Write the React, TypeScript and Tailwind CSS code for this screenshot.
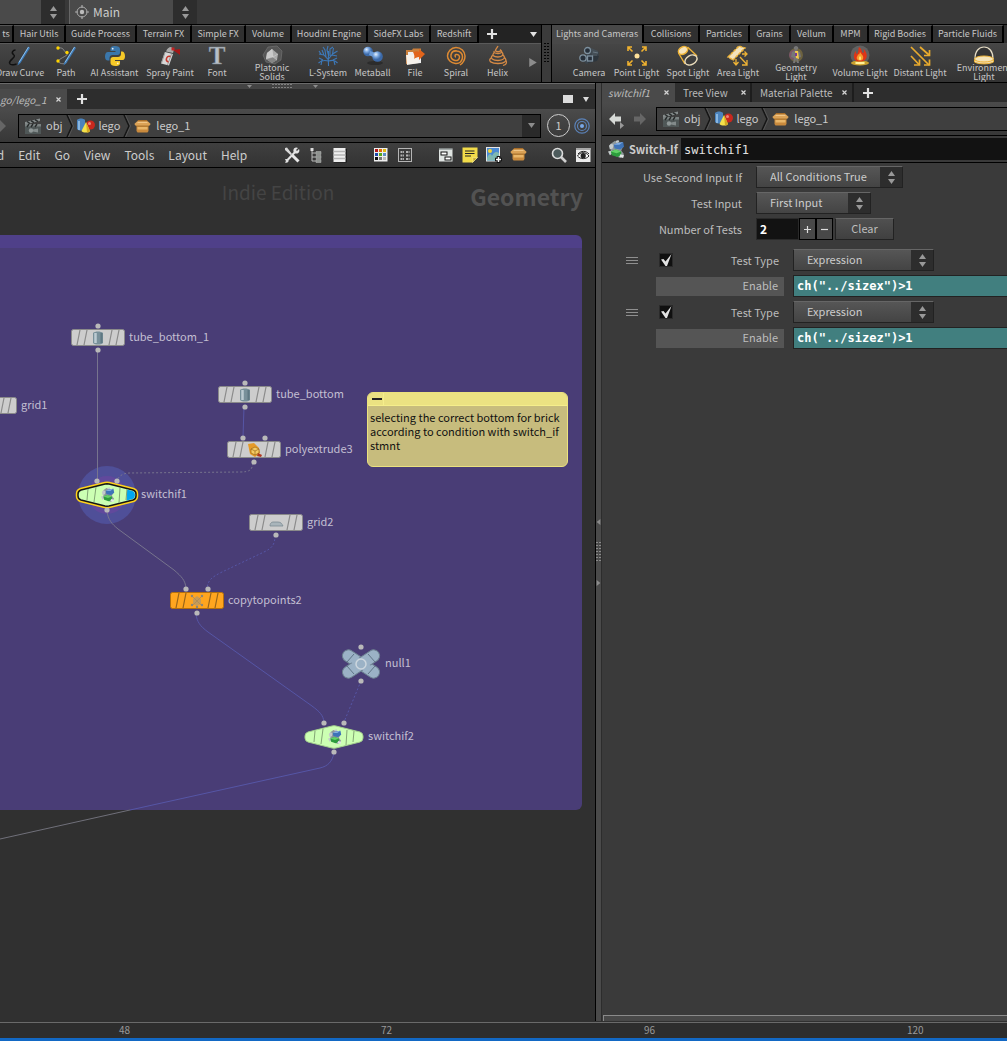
import React from 'react';
import { clsx } from 'clsx';

type IconProps = { className?: string };

/* ---------- small shapes ---------- */

const Tri: React.FC<{ dir: 'up' | 'down' | 'left' | 'right'; className?: string }> = ({ dir, className }) => (
  <svg viewBox="0 0 8 6" preserveAspectRatio="none" className={clsx('fill-current', className)}>
    {dir === 'up' && <path d="M4 0 8 6H0Z" />}
    {dir === 'down' && <path d="M0 0h8L4 6Z" />}
    {dir === 'left' && <path d="M7 0 1 3 7 6Z" />}
    {dir === 'right' && <path d="M1 0 7 3 1 6Z" />}
  </svg>
);

const Plus: React.FC<IconProps> = ({ className }) => (
  <svg viewBox="0 0 10 10" className={clsx('size-[10px]', className)}>
    <path d="M5 0v10M0 5h10" stroke="#e2e2e2" strokeWidth="2.2" />
  </svg>
);

const Close = () => (
  <svg viewBox="0 0 5 5" className="size-[5px]">
    <path d="M.5 .5l4 4M4.500 .5l-4 4" stroke="#d5d5d5" strokeWidth="1.200" />
  </svg>
);

const Dots: React.FC<{ cols: number; rows: number; gap?: number; fill?: string }> = ({ cols, rows, gap = 3, fill = '#777' }) => (
  <svg width={cols * gap} height={rows * gap} className="shrink-0">
    {Array.from({ length: cols * rows }, (_, i) => (
      <rect key={i} x={(i % cols) * gap} y={Math.floor(i / cols) * gap} width={gap - 1} height={1} fill={fill} />
    ))}
  </svg>
);

/* ---------- shelf icons, 20 x 20 ---------- */

const Pen = () => (
  <g>
    <path d="M18.500 .5 8.500 16l-1 3.500 3-2.500L20 2Z" fill="#3c78b4" />
    <path d="M18.500 1 9 16.500" stroke="#8fc0ea" strokeWidth="1" />
  </g>
);

const shelfIcons: Record<string, React.ReactNode> = {
  draw: (
    <>
      <path d="M5.500 4C3 4 1 7 3.500 8.500 7 11-1 14-.5 17c.5 3 5 1.500 7 1" fill="none" stroke="#111" strokeWidth="1.500" />
      <Pen />
    </>
  ),
  path: (
    <>
      <path d="M2 2c7-1 5 4 9 5C14 9 4 12 2 15c2 4 8 3 9 1" fill="none" stroke="#999" strokeWidth=".8" />
      <Pen />
      <g fill="#ffd400">
        <circle cx="2" cy="2" r="1.700" />
        <circle cx="11" cy="6.500" r="1.700" />
        <circle cx="2" cy="15" r="1.700" />
      </g>
    </>
  ),
  python: (
    <>
      <path d="M10 0C6.500 0 5.500 1.300 5.500 3v2h5v1H3C1 6 0 8 0 10.500S1 14.500 3 14.500h1.500V12c0-2 1.500-3 3-3h5C14 9 15 8 15 6.500V3C15 1 13 0 10 0Z" fill="#3b77ab" />
      <path d="M10.500 20c3.500 0 4.500-1.300 4.500-3v-2h-5v-1h7.500c2 0 2.500-2 2.500-4S19 5.500 17.500 5.500H16V8c0 2-1.500 3-3 3H8c-1.500 0-2.500 1-2.500 2.500V17c0 2 2 3 5 3Z" fill="#f6c928" />
      <circle cx="7.700" cy="2.700" r=".9" fill="#e8eef5" />
      <circle cx="12.800" cy="17.300" r=".9" fill="#fff6d5" />
    </>
  ),
  spray: (
    <>
      <path d="M13 4 20 3v6Z" fill="#a31818" />
      <path d="m5 6 8 2-4 11.500-8-2Z" fill="#d6d6d6" />
      <path d="m11.500 8-4 11M5 6.500 1.500 17" stroke="#999" strokeWidth="1" />
      <path d="M6 5.500c1-3 3-4.500 5-4.500l2.500 1.500c.5 1 0 3-.5 4.500Z" fill="#aaa" />
      <path d="M11.500 1.500h3v3h-3Z" fill="#c42222" />
      <path d="M10.500 10.500c-2.500-1-3.500.5-4 2s.5 3 2 3.500" fill="none" stroke="#c4372c" strokeWidth="1.500" />
    </>
  ),
  font: (
    <text x="10" y="18" textAnchor="middle" fontFamily="Liberation Serif, serif" fontWeight="700" fontSize="25" fill="#b7bfc6" stroke="#788088" strokeWidth=".4">
      T
    </text>
  ),
  platonic: (
    <>
      <path d="m6 1 9-1 5 5-1 9-6 4-9-2-3-7Z" fill="#565656" stroke="#777" strokeWidth=".6" />
      <path d="m10 3 6 5-1 6-5 3-6-4 1-6Z" fill="#aaa" />
      <path d="m10 3 1 8-7 2 1-6Z" fill="#c9c9c9" />
      <path d="m11 11 4 3-5 3-6-4Z" fill="#858585" />
      <path d="m10 3 1 8 5-3M11 11l4 3M11 11l-7 2" stroke="#ddd" strokeWidth=".4" fill="none" />
    </>
  ),
  lsystem: (
    <path
      d="M10.500 20c0-5-.5-8 0-11V5M10.500 14 6 9 4 4M6 9l-5-1M8 11 7 4 5 1M10.500 9 9 4l1-4M10.500 13l4-5 1-6M14.500 8l5-3M14 9l5 1M10.500 15c-4-1-7-1-10 2M5 14l-4-2M4 14l-1 5M10.500 15c4-1 6-1 9 2M15 14l4-2M16 15l1 4M12 10l0-7 3-2M3 8 1 5"
      fill="none"
      stroke="#3d79b9"
      strokeWidth="1.100"
    />
  ),
  metaball: (
    <>
      <ellipse cx="12" cy="17" rx="8" ry="2" fill="#2c2c2c" />
      <circle cx="5" cy="5.500" r="4.800" fill="url(#ball)" />
      <path d="m7 5 6 2-1 5-6-3Z" fill="#6b9bd8" />
      <circle cx="14.500" cy="10.500" r="5.300" fill="url(#ball)" />
    </>
  ),
  file: (
    <>
      <path d="M1 4h6l1-1.500h8V16L1 18Z" fill="#c97f3b" />
      <path d="M3 6h13v11L3 18Z" fill="#eee" />
      <path d="m1 9 10 0 3 8-12 2Z" fill="#f6f1ea" />
      <path d="M8 6c3-1 5-1 6 0V3l6 5-6 6v-3c-2 0-4 1-5 2 1-3 0-5-1-7Z" fill="#e2641b" />
    </>
  ),
  spiral: (
    <path
      d="M10 11c-1 0-1.500-2 0-2.500 2-.5 3.500 1 3.500 2.500 0 2.500-2 4-4.500 3.500-3-.5-4.500-3-4-5.500C5.500 6 8 4.500 11 5c3.500.5 5.500 3 5.500 6 0 4-3 7-7 6.500C5 17 1.500 14 1.500 10S5 1.500 10 1.500s9 4 9 8.500c0 4-2 7-5 9"
      fill="none"
      stroke="#dd8a33"
      strokeWidth="1.500"
    />
  ),
  helix: (
    <g fill="none" stroke="#d68a45" strokeWidth="1.300">
      <path d="M10 0C9 2 7.500 3 7.500 4.500c0 1.500 5 1.500 5 0M12 3.500c3 2 1.500 4-2 4S5 6.500 6.500 5" />
      <path d="M13.500 6c3 2.500 1 5-3.500 5S3.500 9 6 7M15 9c3.500 3 0 5.500-5 5.500S1.500 12 4.500 9.500M16.500 11.500c3.500 3.500 0 6-6.500 6S-.5 15 3 12" />
      <path d="M18 14.500c1.500 2.500 0 4-3 5" />
    </g>
  ),
  camera: (
    <>
      <path d="m3 12 10-8 7 2-1 8-12 4Z" fill="#39424a" />
      <path d="m12 9 8 1-2 5-9 2Z" fill="#2d353c" />
      <path d="m12 2 7 3-1 5-5 0Z" fill="#454f57" />
      <g fill="#27303a" stroke="#7d909e" strokeWidth="1.300">
        <circle cx="8.500" cy="4.500" r="3" />
        <circle cx="4" cy="12" r="3.200" />
        <rect x="8.500" y="10" width="5" height="5" />
      </g>
      <path d="m14 6 5 1" stroke="#677580" />
    </>
  ),
  point: (
    <>
      <circle cx="10" cy="10" r="2.500" fill="#ffe19a" />
      <g fill="none" stroke="#f0b22f" strokeWidth="1.600">
        <path d="M5.500 5.500l-4-4M1 5V1h4M14.500 5.500l4-4M15 1h4v4M5.500 14.500l-4 4M1 15v4h4M14.500 14.500l4 4M15 19h4v-4" />
      </g>
    </>
  ),
  spot: (
    <g stroke="#eeb336" strokeWidth="1.400">
      <path d="M0.500 7 7 18M9.500 1 19 10" />
      <ellipse cx="5" cy="4.500" rx="5" ry="3.500" transform="rotate(-30 5 4.500)" fill="#f5e3bb" />
      <ellipse cx="13" cy="14" rx="6.500" ry="4.500" transform="rotate(-30 13 14)" fill="none" stroke="#eadcbc" />
    </g>
  ),
  area: (
    <>
      <path d="m0 11 11-11 6 2L5 14Z" fill="#f3e3bd" stroke="#eeb336" strokeWidth="1.500" strokeDasharray="3 1" />
      <g fill="none" stroke="#eeb336" strokeWidth="1.300">
        <path d="M8 13v6M5.500 16 8 19l2.500-3M12 11l7 7.500M19 14v5h-5M14 8h5M16.500 5.500 19 8l-2.500 2.500" />
      </g>
    </>
  ),
  geometry: (
    <>
      <circle cx="10" cy="9" r="7" fill="#a38b3e" opacity=".45" />
      <circle cx="8" cy="9" r="5" fill="#8c4b94" opacity=".5" />
      <path d="M10 0c3 0 3 4 0 4S7 0 10 0ZM6 6l4-2 4 2 1 5-3 1 1 5h-2l-1-4-1 4H7l1-5-3-1Z" fill="#777" />
      <path d="m9 5 3 0 1 8-3-1Z" fill="#f5c74a" />
      <path d="M9 7l2 0 0 3-2 0Z" fill="#7b3c92" />
    </>
  ),
  fire: (
    <>
      <circle cx="10" cy="9" r="9.500" fill="#777" opacity=".6" />
      <ellipse cx="10" cy="17" rx="9" ry="2.500" fill="#c9a02d" />
      <ellipse cx="10" cy="17" rx="5" ry="1.200" fill="#fff29a" />
      <path d="M9 1c4 3 2 5 4 6 2-1 0-3 1-4 3 4 4 8 1 11-3 2-8 2-10 0-2-3-1-7 1-9 0 2 0 3 1 3 2-2 1-5 2-7Z" fill="#de3517" />
      <path d="M10 6c2 3 4 4 3 7-1 2-5 2-6 0s1-3 1-5c1 1 1 1 2-2Z" fill="#f79a2b" />
      <path d="M10 10c2 2 1 4 0 4s-2-2 0-4Z" fill="#ffe27a" />
    </>
  ),
  distant: (
    <g fill="none" stroke="#e9ab2e" strokeWidth="1.700">
      <path d="m1 1 18 18M1 10l8 8.500M10 1l9 8" />
      <path d="M4 19h5.500v-5.500M14 19h5.500v-5.500M14 9.500h5.500V4" />
    </g>
  ),
  environment: (
    <>
      <path d="M1 13C1 5 5 1 10 1s9 4 9 12" fill="#333" stroke="#e5dcc5" strokeWidth="1.200" />
      <path d="M.5 14v2c4 2.500 15 2.500 19 0v-2Z" fill="#eedcb4" stroke="#eeb336" strokeWidth="1" />
      <ellipse cx="10" cy="13" rx="9.500" ry="3" fill="#f4e3b8" stroke="#eeb336" strokeWidth="1" />
    </>
  ),
};

/* ---------- other icons ---------- */

const Clapper: React.FC<IconProps> = ({ className }) => (
  <svg viewBox="0 0 18 16" className={clsx('h-4 w-[18px] shrink-0', className)}>
    <rect x="1" y="6" width="16" height="10" fill="#4f5757" />
    <path d="m1 4 15-3.500V3L1 6.500Z" fill="#858b8b" />
    <path d="m3 3.500 3 2M7 2.600l3 2M11 1.600l3 2" stroke="#272b2b" strokeWidth="1.400" />
    <rect x="1" y="6" width="16" height="2.500" fill="#7b8282" />
    <path d="M3 9l2-3M7 9l2-3M11 9l2-3" stroke="#272b2b" strokeWidth="1.400" />
    <circle cx="7" cy="12.500" r="2.200" fill="#8f9797" />
    <path d="M9 11.500l5-1v4l-5-1Z" fill="#838b8b" />
  </svg>
);

const Shapes: React.FC<IconProps> = ({ className }) => (
  <svg viewBox="0 0 18 15" className={clsx('h-[15px] w-[18px] shrink-0', className)}>
    <path d="M0 2c2-2 6-2 8 0v9c-2 2-6 2-8 0Z" fill="#4b83bd" />
    <path d="M2 3v9" stroke="#9cc7ec" strokeWidth="1.500" />
    <circle cx="13.500" cy="7" r="4.500" fill="#c8281e" />
    <circle cx="12.500" cy="5.500" r="1.500" fill="#ea8578" />
    <path d="m9 4 4 9c-1 2-7 2-8.500 0Z" fill="#f5e24a" />
    <path d="m9 4 4 9c-.7 1-2 1.500-3 1.500Z" fill="#d3a922" />
  </svg>
);

const BoxShape = () => (
  <>
    <path d="M2.500 5.500h12V12l-1 1.500h-10l-1-1.500Z" fill="#c98a3d" />
    <path d="M3.500 8h10v2.500h-10Z" fill="#e9b669" />
    <path d="M4 1h9l1.500 3h-12Z" fill="#a86d28" />
    <path d="m3 2.500 11 0 2.700 2.500-1.700 2H2L.3 5Z" fill="#dba256" />
    <path d="m3.500 3.300 10 0" stroke="#f6cf94" strokeWidth="1" />
    <path d="M2 7h13" stroke="#8d5a1d" strokeWidth=".6" />
  </>
);

const Box: React.FC<IconProps> = ({ className }) => (
  <svg viewBox="0 0 17 14" className={clsx('h-[14px] w-[17px] shrink-0', className)}>
    <BoxShape />
  </svg>
);

const SwitchGlyph: React.FC<{ size: number }> = ({ size }) => (
  <svg viewBox="0 0 18 18" width={size} height={size} className="shrink-0 overflow-visible">
    <path d="m3 3 4-3 3 1 4 1 2 4-2 4 3 4-4 4-5-2-2-4-3-2Z" fill="#8e989c" />
    <path d="m1 5 2-2 3 1-1 4-3 1ZM0 11l4-1 1 3-3 2ZM8 0l3-1 1 2-3 1Z" fill="#c3cacb" />
    <path d="m6 4 4-2 6-1 1 5-4 3-6-1Z" fill="#3e73b8" />
    <path d="m6 4 4-2 6-1-4 3Z" fill="#84aee2" />
    <path d="m3 11 5-2 6 2 0 4-4 2-6-2Z" fill="#2c9d3d" />
    <path d="m3 11 5-2 6 2-5 2Z" fill="#63d268" />
    <path d="m13 14 4 1-1 3-4-1Z" fill="#dfe4e4" />
  </svg>
);

const Arrow: React.FC<{ flip?: boolean; fill: string }> = ({ flip, fill }) => (
  <svg viewBox="0 0 16 16" className="size-4 shrink-0 overflow-visible">
    <path d={flip ? 'M14 8 8 2v3.500H2v5h6V14Z' : 'M1 8l6-6v3.500h6v5H7V14Z'} fill={fill} />
    {!flip && <path d="m12 11 4 3.500-4 3.500Z" fill="#999" />}
  </svg>
);

const toolIcons: Record<string, React.ReactNode> = {
  wrench: (
    <>
      <path d="M3 13.500 12 4" stroke="#e2e2e2" strokeWidth="2" />
      <path d="M10 1.500c2-1.500 3-1 4-.5l-2 2 1 1 2-2c1 2 0 5-3 4.500S9 3 10 1.500ZM1 12.500c1.500-1 3.500 0 3.500 1.500S3 16 1 15.500l1-1.500Z" fill="#e2e2e2" />
      <path d="m1 1 2-.5L8 7 6.500 8 1 3Z" fill="#d8d8d8" />
      <path d="m8.500 8.500 6 6" stroke="#e8e8e8" strokeWidth="3" />
    </>
  ),
  tree: (
    <>
      <path d="M4 3v11M4 6h4M4 10h4M4 14h4" stroke="#bbb" strokeWidth="1" fill="none" />
      <path d="M2.500 1h3v3h-3Z" fill="#ddd" />
      <path d="M8 4.500h5v3H8ZM8 8.500h5v3H8ZM8 12.500h5v3H8Z" fill="#8f9490" stroke="#bbb" strokeWidth=".5" />
    </>
  ),
  list: (
    <>
      <rect x="2" y="2" width="13" height="13.500" fill="#1c1c1c" />
      <path d="M1.500 1h12v14h-12Z" fill="#efefef" />
      <path d="M1.500 4.500h12M1.500 8h12M1.500 11.500h12" stroke="#b5b5b5" strokeWidth="1.400" />
    </>
  ),
  colors: (
    <>
      <rect x="1" y="1" width="13.500" height="13.500" fill="#efefef" />
      {['#b01818', '#df6b10', '#dfb90d', '#1d49ab', '#56a819', '#5c8dc4', '#111', '#777', '#bbb'].map((c, i) => (
        <rect key={i} x={2 + (i % 3) * 4} y={2 + Math.floor(i / 3) * 4} width="3" height="3" fill={c} />
      ))}
    </>
  ),
  table: (
    <g fill="none" stroke="#b5b5b5">
      <rect x="1.500" y="1.500" width="13" height="13" strokeWidth="1" />
      <path d="M3.500 5h3.500M9 5h3.500M3.500 8.500h3.500M9 8.500h3.500M3.500 12h3.500M9 12h3.500" strokeWidth="1.800" strokeDasharray="2 .6" />
    </g>
  ),
  layout: (
    <>
      <rect x="1" y="1.500" width="13.500" height="13" fill="#dfe4e2" />
      <path d="M1 2h13.500" stroke="#6f7776" />
      <rect x="3" y="5" width="6" height="3" fill="#fff" stroke="#111" />
      <rect x="7" y="10" width="6" height="3" fill="#fff" stroke="#111" />
    </>
  ),
  note: (
    <>
      <path d="M.5.5h15v10l-5 5H.5Z" fill="#f2dc4a" />
      <path d="M10.500 15.500c1-2 .5-3.500 0-5 2 .5 4 .5 5 0Z" fill="#c3a827" stroke="#fff3a0" strokeWidth=".6" />
      <path d="M3 4h9.500M3 6.500h9.500M3 9h6" stroke="#222" strokeWidth="1.200" />
    </>
  ),
  image: (
    <>
      <rect x=".5" y=".5" width="13" height="13.500" fill="#4b8ad2" stroke="#e7e7e7" />
      <path d="M1 11c2-5 4-5 5-2 2-4 4-5 7-3v7.500H1Z" fill="#7fb8b0" />
      <circle cx="4" cy="4" r="2" fill="#f6d533" />
      <path d="M12.500 9v7M9 12.500h7" stroke="#111" strokeWidth="3.600" />
      <path d="M12.500 10v5M10 12.500h5" stroke="#fff" strokeWidth="1.500" />
    </>
  ),
  box: <BoxShape />,
  search: (
    <>
      <path d="m10 10 5 5" stroke="#cfcfcf" strokeWidth="2.600" />
      <circle cx="6.500" cy="6.500" r="5" fill="#4d5b5c" stroke="#dcdcdc" strokeWidth="1.600" />
    </>
  ),
  eye: (
    <>
      <rect x="1" y="1" width="14.500" height="14" fill="#ececec" />
      <path d="M1 1h14.500v2H1Z" fill="#a9a9a9" />
      <path d="M2.500 9c3-4.500 8-4.500 11.500 0-3 3.500-8.500 3.500-11.500 0Z" fill="#fff" stroke="#222" strokeWidth="1" />
      <circle cx="8.200" cy="8.700" r="2.600" fill="#222" />
      <path d="M3 7c3-3.500 8-3.500 11 0" stroke="#222" strokeWidth="1" fill="none" />
    </>
  ),
};

/* ---------- controls ---------- */

const Spinner: React.FC<IconProps> = ({ className }) => (
  <span className={clsx('pointer-events-none flex flex-col items-center justify-center gap-[3px] bg-[#2d2d2d] text-[#999]', className)}>
    <Tri dir="up" className="h-[5px] w-[7px]" />
    <Tri dir="down" className="h-[5px] w-[7px]" />
  </span>
);

interface DropProps {
  id: string;
  value: string;
  className: string;
}

const Drop: React.FC<DropProps> = ({ id, value, className }) => (
  <div className={clsx('relative h-[22px] shrink-0 border border-[#222] border-t-[#666] bg-linear-to-b from-[#565656] to-[#444]', className)}>
    <select id={id} className="block h-full w-full appearance-none bg-transparent pr-6 pb-[2px] pl-[13px] text-[11px] leading-[18px] text-[#ccc] outline-none">
      <option>{value}</option>
    </select>
    <Spinner className="absolute inset-y-0 right-0 w-[22px]" />
  </div>
);

const Chevron = () => (
  <svg viewBox="0 0 8 22" className="mx-[3px] h-[22px] w-2 shrink-0 overflow-visible">
    <path d="m1 0 5 11-5 11" fill="none" stroke="#151515" strokeWidth="1.500" />
    <path d="m2.500 0 5 11-5 11" fill="none" stroke="#5a5a5a" strokeWidth=".8" />
  </svg>
);

const Crumbs = () => (
  <>
    <a href="#obj" className="flex items-center gap-1 pl-[5px]">
      <Clapper />
      obj
    </a>
    <Chevron />
    <a href="#lego" className="flex items-center gap-1">
      <Shapes />
      lego
    </a>
    <Chevron />
    <a href="#lego_1" className="flex items-center gap-[5px]">
      <Box />
      lego_1
    </a>
  </>
);

/* ---------- shelf ---------- */

interface ShelfTabData {
  name: string;
  w: string;
  active?: boolean;
}

const leftTabs: ShelfTabData[] = [
  { name: 'ts', w: 'w-[14px]' },
  { name: 'Hair Utils', w: 'w-[52px]' },
  { name: 'Guide Process', w: 'w-[71px]' },
  { name: 'Terrain FX', w: 'w-[55px]' },
  { name: 'Simple FX', w: 'w-[54px]' },
  { name: 'Volume', w: 'w-[46px]' },
  { name: 'Houdini Engine', w: 'w-[76px]' },
  { name: 'SideFX Labs', w: 'w-[63px]' },
  { name: 'Redshift', w: 'w-[48px]' },
];

const rightTabs: ShelfTabData[] = [
  { name: 'Lights and Cameras', w: 'w-[92px]', active: true },
  { name: 'Collisions', w: 'w-[56px]' },
  { name: 'Particles', w: 'w-[50px]' },
  { name: 'Grains', w: 'w-[41px]' },
  { name: 'Vellum', w: 'w-[43px]' },
  { name: 'MPM', w: 'w-[35px]' },
  { name: 'Rigid Bodies', w: 'w-[64px]' },
  { name: 'Particle Fluids', w: 'w-[71px]' },
];

interface ToolData {
  name: string[];
  icon: string;
  w: string;
}

const leftTools: ToolData[] = [
  { name: ['Draw Curve'], icon: 'draw', w: 'w-[50px]' },
  { name: ['Path'], icon: 'path', w: 'w-[42px]' },
  { name: ['AI Assistant'], icon: 'python', w: 'w-[55px]' },
  { name: ['Spray Paint'], icon: 'spray', w: 'w-[56px]' },
  { name: ['Font'], icon: 'font', w: 'w-[38px]' },
  { name: ['Platonic', 'Solids'], icon: 'platonic', w: 'w-[72px]' },
  { name: ['L-System'], icon: 'lsystem', w: 'w-[40px]' },
  { name: ['Metaball'], icon: 'metaball', w: 'w-[49px]' },
  { name: ['File'], icon: 'file', w: 'w-[36px]' },
  { name: ['Spiral'], icon: 'spiral', w: 'w-[46px]' },
  { name: ['Helix'], icon: 'helix', w: 'w-[37px]' },
];

const rightTools: ToolData[] = [
  { name: ['Camera'], icon: 'camera', w: 'w-[48px]' },
  { name: ['Point Light'], icon: 'point', w: 'w-[47px]' },
  { name: ['Spot Light'], icon: 'spot', w: 'w-[56px]' },
  { name: ['Area Light'], icon: 'area', w: 'w-[44px]' },
  { name: ['Geometry', 'Light'], icon: 'geometry', w: 'w-[72px]' },
  { name: ['Volume Light'], icon: 'fire', w: 'w-[56px]' },
  { name: ['Distant Light'], icon: 'distant', w: 'w-[64px]' },
  { name: ['Environment', 'Light'], icon: 'environment', w: 'w-[64px]' },
];

const ShelfTab: React.FC<ShelfTabData> = ({ name, w, active }) => (
  <button
    className={clsx(
      'flex h-[18px] shrink-0 items-center justify-center border-r-2 border-black text-[9px] leading-[16px] whitespace-nowrap',
      active ? 'bg-[#484848]' : 'border-b border-t border-t-[#555] bg-[#303030]',
      w
    )}
  >
    {name}
  </button>
);

const ShelfTool: React.FC<ToolData> = ({ name, icon, w }) => (
  <button className={clsx('flex shrink-0 flex-col items-center pt-[2px] text-[9px] leading-[9px] whitespace-nowrap', w)}>
    <svg viewBox="0 0 20 20" className="size-5 shrink-0 overflow-visible">
      {shelfIcons[icon]}
    </svg>
    <span className="-mt-[3px] flex h-[18px] flex-col justify-center">
      {name.map((line) => (
        <span key={line}>{line}</span>
      ))}
    </span>
  </button>
);

const Shelf = () => (
  <div className="flex h-[58px] border-b border-black text-[#c6c6c6]">
    <div className="w-[541px] shrink-0 overflow-hidden">
      <div className="flex h-[18px] items-center bg-[#232323]">
        {leftTabs.map((t) => (
          <ShelfTab key={t.name} {...t} />
        ))}
        <button aria-label="Add shelf" className="ml-2">
          <Plus />
        </button>
        <button aria-label="Shelf menu" className="mr-1 ml-auto">
          <Tri dir="down" className="h-[5px] w-[7px] text-[#e2e2e2]" />
        </button>
      </div>
      <div className="flex h-[39px] border-t border-[#5a5a5a] bg-linear-to-b from-[#464646] to-[#333]">
        <div className="-ml-[5px] flex">
          {leftTools.map((t) => (
            <ShelfTool key={t.icon} {...t} />
          ))}
        </div>
        <Tri dir="right" className="mt-[14px] ml-3 h-[9px] w-[10px] text-[#8c8c8c]" />
      </div>
    </div>
    <div className="flex w-[11px] shrink-0 items-center justify-center border-x border-black bg-[#3b3b3b]">
      <Dots cols={2} rows={7} gap={3} fill="#050505" />
    </div>
    <div className="min-w-0 flex-1 overflow-hidden">
      <div className="flex h-[18px] bg-[#303030]">
        {rightTabs.map((t) => (
          <ShelfTab key={t.name} {...t} />
        ))}
      </div>
      <div className="flex h-[39px] border-t border-[#484848] bg-linear-to-b from-[#464646] to-[#333] pl-[13px]">
        {rightTools.map((t) => (
          <ShelfTool key={t.icon} {...t} />
        ))}
      </div>
    </div>
  </div>
);

/* ---------- network editor ---------- */

type NodeKind = 'box' | 'switch' | 'null';

interface NodeData {
  name: string;
  kind: NodeKind;
  x: number;
  y: number;
  glyph?: 'tube' | 'extrude' | 'grid' | 'copy';
  ins: number[];
  hideOut?: boolean;
  fill?: string;
  selected?: boolean;
}

const nodes: NodeData[] = [
  { name: 'tube_bottom_1', kind: 'box', x: 98, y: 170, glyph: 'tube', ins: [0] },
  { name: 'grid1', kind: 'box', x: -10, y: 238, ins: [], hideOut: true },
  { name: 'tube_bottom', kind: 'box', x: 245, y: 227, glyph: 'tube', ins: [0] },
  { name: 'polyextrude3', kind: 'box', x: 254, y: 282, glyph: 'extrude', ins: [-11, 11] },
  { name: 'switchif1', kind: 'switch', x: 107, y: 327, ins: [-10, 10], selected: true },
  { name: 'grid2', kind: 'box', x: 276, y: 355, glyph: 'grid', ins: [] },
  { name: 'copytopoints2', kind: 'box', x: 197, y: 433, glyph: 'copy', ins: [-11, 11], fill: '#ffa51f' },
  { name: 'null1', kind: 'null', x: 361, y: 496, ins: [0] },
  { name: 'switchif2', kind: 'switch', x: 334, y: 569, ins: [-10, 10] },
];

const wires = [
  { d: 'M97.500 182V313', color: '#77748e' },
  { d: 'M244 239 243 269', color: '#5656a6' },
  { d: 'M253 295C252 302 250 304 240 304L130 305C122 305 118 309 117 313', color: '#77748e', dashed: true },
  { d: 'M107 343C108 352 112 356 118 361L174 402C182 409 185 412 186 420', color: '#77748e' },
  { d: 'M275 367C275 377 272 380 264 384L222 404C212 409 208 412 207 420', color: '#5656a6', dashed: true },
  { d: 'M196 446C197 454 200 458 208 464L312 538C320 544 323 547 324 554', color: '#5656a6' },
  { d: 'M361 513 344 554', color: '#5656a6', dashed: true },
  { d: 'M334 585C332 594 328 598 320 600L130 642', color: '#5656a6' },
  { d: 'M130 642 0 671', color: '#70707a' },
];

const glyphs = {
  tube: (
    <>
      <path d="M-5-5C-3-7 3-7 5-5V5C3 7-3 7-5 5Z" fill="#78909a" />
      <path d="M-2.500-5V5" stroke="#bccbd2" strokeWidth="2.500" />
      <path d="M3.500-5V5" stroke="#5f7883" strokeWidth="2" />
    </>
  ),
  extrude: (
    <>
      <path d="m-6-6 6-1 5 5 1 5-5 4-5-3Z" fill="#e59a28" />
      <path d="m-3-1 4-2 4 2v4l-4 2-4-2Z" fill="#f5cb63" stroke="#8d5c12" strokeWidth=".6" />
      <path d="M1 1v4M-3-1 1 1l4-2" stroke="#8d5c12" strokeWidth=".6" fill="none" />
      <path d="m4 3 4 2-1 2-4-1Z" fill="#b23a20" />
    </>
  ),
  grid: <path d="M-6 3c0-2 1-4 3-4h5c3 0 4 2 5 4Z" fill="#a9b5bb" stroke="#7c8a92" strokeWidth=".8" />,
  copy: (
    <>
      <path d="m-4-2 4-3 4 3v5l-4 2-4-2Z" fill="#c69b58" />
      <path d="m-5-5 10 10M5-5-5 5" stroke="#a98a5a" strokeWidth=".8" />
      <g fill="#8b8577">
        <circle cx="-5" cy="-5" r="1.200" />
        <circle cx="5" cy="-5" r="1.200" />
        <circle cx="-5" cy="4" r="1.200" />
        <circle cx="5" cy="4" r="1.200" />
        <circle cx="0" cy="6" r="1.200" />
      </g>
    </>
  ),
};

const HEX = 'M-2-11 0-11.300 2-11 26-5Q29-4 29-1V1Q29 4 26 5L2 11 0 11.300-2 11-26 5Q-29 4-29 1V-1Q-29-4-26-5Z';

const NodeShape: React.FC<{ node: NodeData }> = ({ node }) => {
  if (node.kind === 'null') {
    return (
      <g>
        <g fill="#9bb2c6" stroke="#6c7f90" strokeWidth="1">
          <rect x="-21" y="-6" width="42" height="12" rx="6" transform="rotate(33)" />
          <rect x="-21" y="-6" width="42" height="12" rx="6" transform="rotate(-33)" />
        </g>
        <path d="M-12-8 0 0 12-8M-12 8 0 0 12 8" stroke="#9bb2c6" strokeWidth="8" fill="none" />
        <path d="m-14-2 7-8M7-10l7 8M-14 2l7 8M7 10l7-8" stroke="#5f7486" strokeWidth="1" />
        <circle r="5" fill="#9bb2c6" stroke="#ccd6de" strokeWidth="1.500" />
      </g>
    );
  }
  if (node.kind === 'switch') {
    return (
      <g>
        {node.selected && <path d={HEX} fill="none" stroke="#ffd21a" strokeWidth="4.500" />}
        <path d={HEX} fill="#ccffb3" stroke={node.selected ? '#151515' : '#a4d08e'} strokeWidth={node.selected ? 1.5 : 1} />
        {node.selected && <path d="m20-5.500 5.500 1.500q2.500 1 2.500 4t-2.500 4l-6 1.500Z" fill="#00a6f2" />}
        <path d="m-19-6-1 11M-11-8l-2 15M13-7l-1 15M20-6l-1 11" stroke="#83a575" strokeWidth="1" />
        <g transform="translate(-6 -7)">
          <SwitchGlyph size={14} />
        </g>
      </g>
    );
  }
  return (
    <g>
      <rect x="-26.500" y="-8.500" width="53" height="16" rx="2" fill={node.fill ?? '#cdcdcd'} stroke={node.fill ? '#b46f0c' : '#8a8a8a'} />
      <path d="m-18-8-3 15M-11-8l-3 15M14-8l-3 15M21-8l-3 15" stroke={node.fill ? '#98641a' : '#8a8a8a'} strokeWidth="1.200" />
      {node.glyph && glyphs[node.glyph]}
    </g>
  );
};

// distance of the input and output dots from the node centre
const ports: Record<NodeKind, [number, number]> = {
  box: [12, 12],
  switch: [14, 15],
  null: [17, 17],
};

const NetworkNode: React.FC<{ node: NodeData }> = ({ node }) => {
  const [inY, outY] = ports[node.kind];
  return (
    <div className="absolute size-0" style={{ left: node.x, top: node.y }}>
      <svg className="absolute size-px overflow-visible">
        <NodeShape node={node} />
        {node.ins.map((dx) => (
          <circle key={dx} cx={dx} cy={-inY} r="2.600" fill="#b9b9b9" />
        ))}
        {!node.hideOut && <circle cx="0" cy={outY} r="2.600" fill="#b9b9b9" />}
      </svg>
      <span
        className={clsx(
          'absolute -top-[10px] text-[11px] leading-4 text-[#c3bfd2]',
          node.kind === 'null' ? 'left-6' : node.kind === 'switch' ? 'left-[34px]' : 'left-[31px]'
        )}
      >
        {node.name}
      </span>
    </div>
  );
};

const Network = () => (
  <div className="relative flex-1 overflow-hidden bg-[#303030]">
    <div className="flex items-start justify-end gap-[136px] pt-[10px] pr-3">
      <span className="text-[19px] leading-7 text-[#444]">Indie Edition</span>
      <span className="text-[23px] leading-9 font-bold text-[#525252]">Geometry</span>
    </div>
    <div className="absolute top-[67px] -left-2 h-[575px] w-[590px] rounded-md border-t-[13px] border-[#4f4089] bg-[#493d76]" />
    <svg className="absolute inset-0 h-full w-full">
      {nodes
        .filter((n) => n.selected)
        .map((n) => (
          <g key={n.name}>
            <circle cx={n.x} cy={n.y} r="29" fill="#4f4f98" />
            <circle cx={n.x} cy={n.y} r="19" fill="#61499c" />
          </g>
        ))}
      {wires.map((w) => (
        <path key={w.d} d={w.d} fill="none" stroke={w.color} strokeWidth="1" strokeDasharray={w.dashed ? '2 2' : undefined} />
      ))}
    </svg>
    {nodes.map((n) => (
      <NetworkNode key={n.name} node={n} />
    ))}
    <div className="absolute top-[224px] left-[367px] h-[75px] w-[201px] overflow-hidden rounded-md border border-[#ebe27f] bg-[#c7bc7d]">
      <div className="flex h-[13px] items-center border-b border-[#f5ee8c] bg-[#ebe282]">
        <button aria-label="Collapse note" className="flex h-full w-4 items-center justify-end border-r border-[#f5ee8c] pr-px">
          <span className="h-[2px] w-[10px] bg-[#222]" />
        </button>
      </div>
      <p className="px-[2px] pt-1 text-[11px] leading-[14px] text-[#111]">
        selecting the correct bottom for brick
        <br />
        according to condition with switch_if
        <br />
        stmnt
      </p>
    </div>
  </div>
);

const toolGroups = [
  ['wrench', 'tree', 'list'],
  ['colors', 'table'],
  ['layout', 'note', 'image', 'box'],
  ['search', 'eye'],
];

const NetworkPane = () => (
  <section className="flex w-[595px] shrink-0 flex-col">
    <div className="flex h-[6px] items-center border-t border-[#6a6a6a] bg-[#434343] text-[#8c8c8c]">
      <Tri dir="down" className="ml-[247px] h-[3px] w-[5px]" />
      <span className="mx-5 flex">
        <Dots cols={7} rows={2} gap={3} fill="#808080" />
      </span>
      <Tri dir="down" className="h-[3px] w-[5px]" />
    </div>
    <div className="flex h-5 items-center bg-[#2d2d2d]">
      <div className="flex h-full w-[67px] items-center justify-between bg-[#4a4a4a] pr-[6px] text-[10px] text-[#bbb] italic">
        <button className="italic">go/lego_1</button>
        <button aria-label="Close tab">
          <Close />
        </button>
      </div>
      <button aria-label="New tab" className="ml-[10px]">
        <Plus />
      </button>
      <button aria-label="Maximize pane" className="mr-[10px] ml-auto h-2 w-[10px] bg-[#dcdcdc]" />
      <button aria-label="Pane menu" className="mr-[6px]">
        <Tri dir="down" className="h-[5px] w-[6px] text-[#dcdcdc]" />
      </button>
    </div>
    <div className="flex h-[34px] items-center border-b border-black bg-linear-to-b from-[#4b4b4b] to-[#373737] text-[11px] text-[#ccc]">
      <span className="-ml-2 w-[26px] shrink-0">
        <Arrow flip fill="#666" />
      </span>
      <nav className="flex h-6 flex-1 items-center border border-black bg-[#3f3f3f]">
        <Crumbs />
        <button aria-label="Path history" className="ml-auto flex h-full w-[18px] items-center justify-center bg-[#2a2a2a]">
          <Tri dir="down" className="h-[5px] w-[7px] text-[#8c8c8c]" />
        </button>
      </nav>
      <button className="ml-[6px] flex size-[23px] items-center justify-center rounded-full border border-[#ccc]">1</button>
      <button aria-label="Follow selection" className="mr-[5px] ml-1">
        <svg viewBox="0 0 16 16" className="size-4">
          <g fill="none" stroke="#5b82b8" strokeWidth="1.200">
            <circle cx="8" cy="8" r="7.200" />
            <circle cx="8" cy="8" r="4.500" />
          </g>
          <circle cx="8" cy="8" r="2" fill="#78a7e6" />
        </svg>
      </button>
    </div>
    <div className="flex h-[25px] items-center border-b border-black bg-linear-to-b from-[#3f3f3f] to-[#333] text-[12px] text-[#ccc]">
      <div className="-ml-[18px] flex w-[302px] shrink-0 gap-[14px]">
        {['Add', 'Edit', 'Go', 'View', 'Tools', 'Layout', 'Help'].map((m) => (
          <button key={m}>{m}</button>
        ))}
      </div>
      <div className="flex gap-[25px]">
        {toolGroups.map((group) => (
          <div key={group[0]} className="flex gap-2">
            {group.map((name) => (
              <button key={name} aria-label={name}>
                <svg viewBox="0 0 16 16" className="size-4 overflow-visible">
                  {toolIcons[name]}
                </svg>
              </button>
            ))}
          </div>
        ))}
      </div>
    </div>
    <Network />
  </section>
);

/* ---------- parameter pane ---------- */

const PaneTab: React.FC<{ name: string; active?: boolean; className: string }> = ({ name, active, className }) => (
  <div className={clsx('flex h-full shrink-0 items-center justify-between text-[10px] text-[#bbb]', active ? 'bg-[#4a4a4a] italic' : 'border-r-2 border-[#1d1d1d] bg-[#2f2f2f]', className)}>
    <button>{name}</button>
    <button aria-label={`Close ${name}`}>
      <Close />
    </button>
  </div>
);

const tests = [
  { id: 'test1', expr: 'ch("../sizex")>1' },
  { id: 'test2', expr: 'ch("../sizez")>1' },
];

const Check: React.FC<{ label: string }> = ({ label }) => (
  <span className="relative size-[14px] shrink-0">
    <input type="checkbox" defaultChecked aria-label={label} className="peer block size-[14px] appearance-none border border-[#2a2a2a] bg-[#101010]" />
    <svg viewBox="0 0 14 14" className="pointer-events-none absolute inset-0 hidden size-[14px] peer-checked:block">
      <path d="M2 6.500 4.500 6l2 2.500L12.500 1 8 13H6.500Z" fill="#e2e2e2" />
    </svg>
  </span>
);

const ParamPane = () => (
  <section className="flex min-w-0 flex-1 flex-col overflow-hidden bg-[#3a3a3a] text-[11px] text-[#bdbdbd]">
    <div className="flex h-[19px] items-center bg-[#2d2d2d]">
      <PaneTab name="switchif1" active className="w-[73px] pr-[6px] pl-[6px]" />
      <PaneTab name="Tree View" className="w-[77px] pr-[4px] pl-[8px]" />
      <PaneTab name="Material Palette" className="w-[102px] pr-[5px] pl-[8px]" />
      <button aria-label="New tab" className="ml-[9px]">
        <Plus />
      </button>
    </div>
    <div className="flex h-[34px] items-center border-b border-black bg-linear-to-b from-[#4b4b4b] to-[#373737] text-[#ccc]">
      <div className="flex w-[54px] shrink-0 gap-2 pl-[6px]">
        <button aria-label="Back">
          <Arrow fill="#d6d9d6" />
        </button>
        <button aria-label="Forward">
          <Arrow flip fill="#666" />
        </button>
      </div>
      <nav className="-mr-px flex h-6 flex-1 items-center border border-black bg-[#3f3f3f]">
        <Crumbs />
      </nav>
    </div>
    <div className="flex h-[27px] items-center border-b border-black pl-[6px]">
      <SwitchGlyph size={17} />
      <label htmlFor="node-name" className="ml-[4px] w-[52px] font-bold whitespace-nowrap text-[#ccc]">
        Switch-If
      </label>
      <input
        id="node-name"
        defaultValue="switchif1"
        className="h-[22px] min-w-0 flex-1 bg-[#121212] px-[3px] pt-[2px] font-['DejaVu_Sans_Mono',monospace] text-[12px] text-[#e2e2e2] outline-none"
      />
    </div>
    <div className="flex-1 pt-px">
      <div className="flex h-[26px] items-center gap-[14px]">
        <label htmlFor="second" className="w-[140px] shrink-0 text-right">
          Use Second Input If
        </label>
        <Drop id="second" value="All Conditions True" className="w-[147px]" />
      </div>
      <div className="flex h-[26px] items-center gap-[14px]">
        <label htmlFor="input" className="w-[140px] shrink-0 text-right">
          Test Input
        </label>
        <Drop id="input" value="First Input" className="w-[115px]" />
      </div>
      <div className="flex h-[26px] items-center gap-[14px]">
        <label htmlFor="count" className="w-[140px] shrink-0 text-right">
          Number of Tests
        </label>
        <div className="flex h-[22px]">
          <input id="count" defaultValue="2" className="w-[43px] border border-[#2a2a2a] bg-[#121212] px-[3px] text-[12px] font-bold text-white outline-none" />
          <button aria-label="Add test" className="flex w-[17px] items-center justify-center border border-black bg-[#484848]">
            <svg viewBox="0 0 7 7" className="size-[7px]">
              <path d="M3.500 0v7M0 3.500h7" stroke="#ddd" strokeWidth="1.200" />
            </svg>
          </button>
          <button aria-label="Remove test" className="flex w-[17px] items-center justify-center border border-black bg-[#484848]">
            <svg viewBox="0 0 7 7" className="size-[7px]">
              <path d="M0 3.500h7" stroke="#ddd" strokeWidth="1.200" />
            </svg>
          </button>
          <button className="ml-[2px] w-[59px] border border-[#222] border-t-[#666] bg-linear-to-b from-[#505050] to-[#404040] pb-[2px] leading-[18px]">Clear</button>
        </div>
      </div>
      <div className="pt-[5px]">
        {tests.map((t) => (
          <div key={t.id}>
            <div className="flex h-[26px] items-center pl-6">
              <svg viewBox="0 0 12 9" className="h-[9px] w-3">
                <path d="M0 1.500h12M0 4.500h12M0 7.500h12" stroke="#8f8f8f" strokeWidth="1" />
              </svg>
              <span className="ml-[21px] flex">
                <Check label="Test enabled" />
              </span>
              <label htmlFor={`${t.id}-type`} className="w-[106px] text-right">
                Test Type
              </label>
              <Drop id={`${t.id}-type`} value="Expression" className="ml-[14px] w-[141px]" />
            </div>
            <div className="flex h-[26px] items-center pl-[54px]">
              <label htmlFor={`${t.id}-enable`} className="h-[19px] w-[128px] shrink-0 bg-[#555] pr-[6px] text-right leading-[17px]">
                Enable
              </label>
              <input
                id={`${t.id}-enable`}
                defaultValue={t.expr}
                className="ml-[9px] h-[22px] min-w-0 flex-1 border border-r-0 border-[#222] bg-[#417f7f] px-[3px] font-['DejaVu_Sans_Mono',monospace] text-[12px] font-bold text-white outline-none"
              />
            </div>
          </div>
        ))}
      </div>
    </div>
    <div className="ml-px h-[6px] border-t border-l border-[#8a8a8a] bg-[#484848]" />
  </section>
);

/* ---------- page ---------- */

const App: React.FC = () => (
  <div className="flex min-h-screen flex-col overflow-hidden bg-[#303030] font-['Noto_Sans_CJK_SC',sans-serif] text-[12px]">
    <header className="flex h-[25px] items-center border-b border-black bg-[#383838]">
      <div className="flex h-6 w-[65px] justify-end bg-[#4a4a4a]">
        <Spinner className="w-6" />
      </div>
      <div className="relative ml-1 flex h-6 w-[128px] items-center border-l border-[#666] bg-[#4a4a4a]">
        <svg viewBox="0 0 14 14" className="ml-[5px] size-[14px] shrink-0">
          <circle cx="7" cy="7" r="5" fill="none" stroke="#aaa" strokeWidth="1" />
          <circle cx="7" cy="7" r="2.200" fill="#bbb" />
          <path d="M7 0v3M7 11v3M0 7h3M11 7h3" stroke="#aaa" strokeWidth="1.200" />
        </svg>
        <select aria-label="Desktop" className="h-full flex-1 appearance-none bg-transparent pl-1 text-[12px] text-[#ccc] outline-none">
          <option>Main</option>
        </select>
        <Spinner className="absolute inset-y-0 right-0 w-6" />
      </div>
    </header>
    <svg className="absolute size-0">
      <defs>
        <radialGradient id="ball" cx=".35" cy=".3">
          <stop offset="0" stopColor="#e4f0ff" />
          <stop offset=".5" stopColor="#7aa6de" />
          <stop offset="1" stopColor="#3b69a8" />
        </radialGradient>
      </defs>
    </svg>
    <Shelf />
    <main className="flex flex-1">
      <NetworkPane />
      <div className="flex w-[7px] shrink-0 flex-col items-center justify-center gap-[17px] border-r border-l border-r-[#2c2c2c] border-l-black bg-[#4a4a4a] text-[#8a8a8a]">
        <Tri dir="left" className="h-[6px] w-[5px]" />
        <Dots cols={2} rows={7} gap={3} fill="#8a8a8a" />
        <Tri dir="right" className="h-[6px] w-[5px]" />
      </div>
      <ParamPane />
    </main>
    <footer className="mt-px flex h-[19px] flex-col border-t border-[#6a6a6a] bg-[#2d2d2d] text-[10px] leading-[14px] text-[#999]">
      <div className="grid h-[15px] grid-cols-[119px_262px_263px_263px_1fr]">
        <span />
        <span>48</span>
        <span>72</span>
        <span>96</span>
        <span>120</span>
      </div>
      <div className="h-[3px] bg-[#1268c4]" />
    </footer>
  </div>
);

export default App;
